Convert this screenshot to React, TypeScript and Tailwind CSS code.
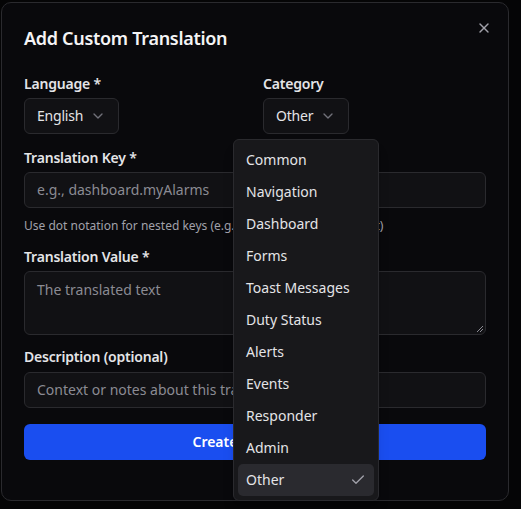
import React from 'react';
import { X, ChevronDown, Check } from 'lucide-react';

const categories = [
  'Common',
  'Navigation',
  'Dashboard',
  'Forms',
  'Toast Messages',
  'Duty Status',
  'Alerts',
  'Events',
  'Responder',
  'Admin',
  'Other',
];

const App: React.FC = () => {
  return (
    <div
      className="w-[521px] h-[509px] bg-[#050506] pl-[1px] pt-[2px] overflow-hidden relative text-[#e4e4e7]"
      style={{ fontFamily: '"Noto Sans", "Open Sans", sans-serif' }}
    >
      {/* Dialog */}
      <div className="relative w-[508px] h-[499px] bg-[#09090c] border border-[#2a2a2e] rounded-[10px] px-[22px] pt-[21px]">
        <button className="absolute right-[16px] top-[17px] text-[#a1a1aa]">
          <X size={16} strokeWidth={2} />
        </button>

        <h2 className="text-lg font-semibold leading-7 text-[#f4f4f5] tracking-[-0.3px]">Add Custom Translation</h2>

        {/* Language / Category */}
        <div className="grid grid-cols-2 gap-4 mt-[22px]">
          <div>
            <label className="block text-sm font-semibold leading-5 tracking-[-0.2px]">Language *</label>
            <button className="mt-[4px] h-[36px] flex items-center gap-[7px] px-3 rounded-md border border-[#2a2a2e] bg-[#111114] text-sm tracking-[-0.2px]">
              English
              <ChevronDown size={16} className="text-[#71717a]" />
            </button>
          </div>
          <div>
            <label className="block text-sm font-semibold leading-5 tracking-[-0.2px]">Category</label>
            <button className="mt-[4px] h-[36px] flex items-center gap-[7px] px-3 rounded-md border border-[#2a2a2e] bg-[#111114] text-sm tracking-[-0.2px]">
              Other
              <ChevronDown size={16} className="text-[#71717a]" />
            </button>
          </div>
        </div>

        {/* Translation key */}
        <label className="block mt-[14px] text-sm font-semibold leading-5 tracking-[-0.2px]">Translation Key *</label>
        <div className="mt-[4px] h-[36px] flex items-center px-3 rounded-md border border-[#2a2a2e] bg-[#111114] text-sm text-[#8b8b93]">
          e.g., dashboard.myAlarms
        </div>
        <p className="mt-[10px] text-xs leading-4 text-[#a1a1aa] whitespace-nowrap">
          Use dot notation for nested keys (e.g., navigation.alarms.target)
        </p>

        {/* Translation value */}
        <label className="block mt-[13px] text-sm font-semibold leading-5 tracking-[-0.2px]">Translation Value *</label>
        <div className="relative mt-[4px] h-[64px] px-3 py-[8px] rounded-md border border-[#2a2a2e] bg-[#111114] text-sm text-[#8b8b93]">
          The translated text
          <svg className="absolute right-[1px] bottom-[1px]" width="8" height="8" viewBox="0 0 8 8">
            <path d="M7 1L1 7M7 4L4 7" stroke="#8b8b93" strokeWidth="1" />
          </svg>
        </div>

        {/* Description */}
        <label className="block mt-[12px] text-sm font-semibold leading-5 tracking-[-0.2px]">Description (optional)</label>
        <div className="mt-[5px] h-[36px] flex items-center px-3 rounded-md border border-[#2a2a2e] bg-[#111114] text-sm text-[#8b8b93] whitespace-nowrap">
          Context or notes about this translation
        </div>

        <button className="mt-[16px] w-full h-[36px] rounded-md bg-[#1a4ef0] text-white text-sm font-semibold">
          Create Translation
        </button>
      </div>

      {/* Category dropdown */}
      <div className="absolute left-[233px] top-[139px] w-[146px] p-[4px] rounded-md border border-[#2a2a2e] bg-[#18181b] shadow-lg">
        {categories.map((c) => (
          <div
            key={c}
            className={`h-[32px] flex items-center justify-between pl-[8px] pr-[8px] rounded-[5px] text-sm ${
              c === 'Other' ? 'bg-[#2a2a2f]' : ''
            }`}
          >
            <span>{c}</span>
            {c === 'Other' && <Check size={16} className="text-[#a1a1aa]" />}
          </div>
        ))}
      </div>
    </div>
  );
};

export default App;
